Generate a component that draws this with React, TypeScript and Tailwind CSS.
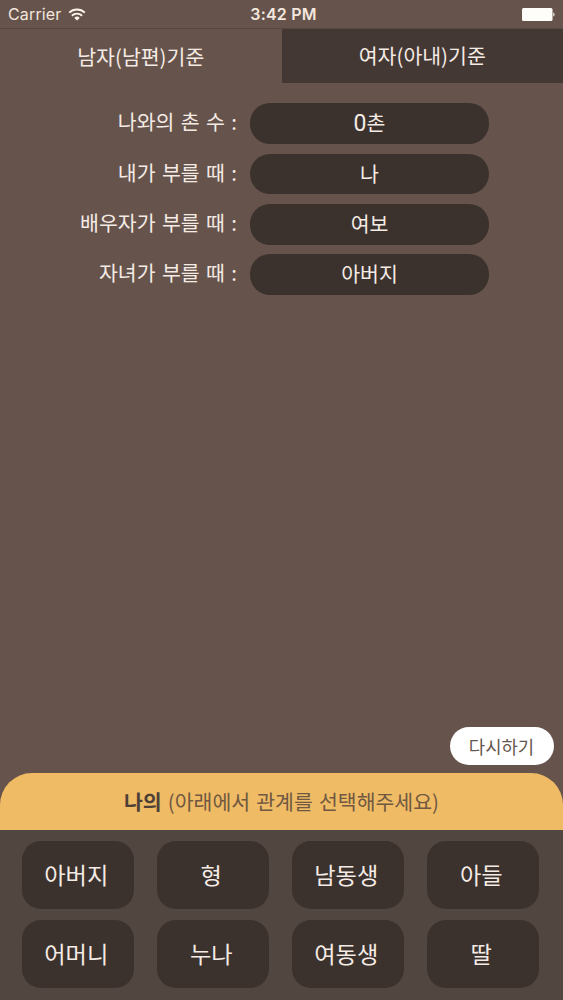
import { useState } from "react";

const tabs = ["남자(남편)기준", "여자(아내)기준"];

const results = [
  { label: "나와의 촌 수 :", degree: 0, value: "촌" },
  { label: "내가 부를 때 :", value: "나" },
  { label: "배우자가 부를 때 :", value: "여보" },
  { label: "자녀가 부를 때 :", value: "아버지" },
];

const relations = ["아버지", "형", "남동생", "아들", "어머니", "누나", "여동생", "딸"];

function WifiIcon() {
  return (
    <svg width="18" height="13" viewBox="0 0 18 13" fill="none" stroke="#fdf3ea" strokeWidth="1.9">
      <path d="M1.2 4.6a11.2 11.2 0 0 1 15.6 0" />
      <path d="M3.9 7.7a7.3 7.3 0 0 1 10.2 0" />
      <path d="M9 12.6 6.3 9.9a3.9 3.9 0 0 1 5.4 0Z" fill="#fdf3ea" stroke="none" />
    </svg>
  );
}

function BatteryIcon() {
  return (
    <svg width="33" height="13" viewBox="0 0 33 13" fill="#fffdfa">
      <rect width="30.5" height="13" rx="1.5" />
      <path d="M31.3 4.5c1.6.4 1.6 3.6 0 4Z" />
    </svg>
  );
}

function StatusBar() {
  return (
    <div className="grid h-[29px] grid-cols-3 items-center border-b border-[#574840] px-2 font-['Inter','Liberation_Sans',sans-serif] text-[16px] font-normal leading-[28px] text-[#f3e7de]">
      <div className="flex items-center gap-[6px]">
        <span className="tracking-[0.15px]">Carrier</span>
        <WifiIcon />
      </div>
      <span className="pl-1 text-center font-semibold tracking-[0.2px]">3:42 PM</span>
      <div className="flex justify-end">
        <BatteryIcon />
      </div>
    </div>
  );
}

export default function App() {
  const [tab, setTab] = useState(0);

  return (
    <div className="flex h-[1000px] w-[563px] flex-col overflow-hidden bg-[#66544c] font-['Noto_Sans_CJK_KR',sans-serif] font-normal text-[#f5ebe5]">
      <StatusBar />

      <div className="grid h-[54px] grid-cols-2">
        {tabs.map((name, i) => (
          <button
            key={name}
            type="button"
            onClick={() => setTab(i)}
            className={`text-[20.5px] ${i === tab ? "leading-[54px]" : "bg-[#433833] pb-px leading-[53px]"}`}
          >
            {name}
          </button>
        ))}
      </div>

      <div className="flex flex-col gap-[9.5px] pt-[20.4px]">
        {results.map((row) => (
          <div key={row.label} className="flex h-[40.8px] items-center">
            <span className="w-[237px] pb-1 text-right text-[20.5px] leading-[37px] [word-spacing:1.8px]">
              {row.label}
            </span>
            <span className="ml-[13px] h-[40.8px] w-[239px] rounded-[20px] bg-[#3b322e] text-center text-[20.5px] leading-[39px]">
              {row.degree !== undefined && <span className="font-['Roboto'] text-[23px] leading-none">{row.degree}</span>}
              {row.value}
            </span>
          </div>
        ))}
      </div>

      <div className="mt-auto flex justify-end pb-2 pr-[9.5px]">
        <button
          type="button"
          className="h-[38px] w-[104px] rounded-full bg-white pb-px text-[17.8px] leading-[36px] text-[#66564f]"
        >
          다시하기
        </button>
      </div>

      <div className="h-[57px] rounded-t-[32px] bg-[#efbb65] text-center text-[20.5px] leading-[57px] text-[#705842] [word-spacing:1.5px]">
        <span className="font-bold text-[#4d4037]">나의</span> (아래에서 관계를 선택해주세요)
      </div>

      <div className="grid h-[170px] grid-cols-4 content-start gap-x-[22.5px] gap-y-[11px] bg-[#514640] pl-[21.5px] pr-6 pt-[11px]">
        {relations.map((name) => (
          <button
            key={name}
            type="button"
            className="h-[68px] rounded-[19px] bg-[#3b322e] pb-0.5 pr-[3px] text-[23.2px] leading-[66px]"
          >
            {name}
          </button>
        ))}
      </div>
    </div>
  );
}
